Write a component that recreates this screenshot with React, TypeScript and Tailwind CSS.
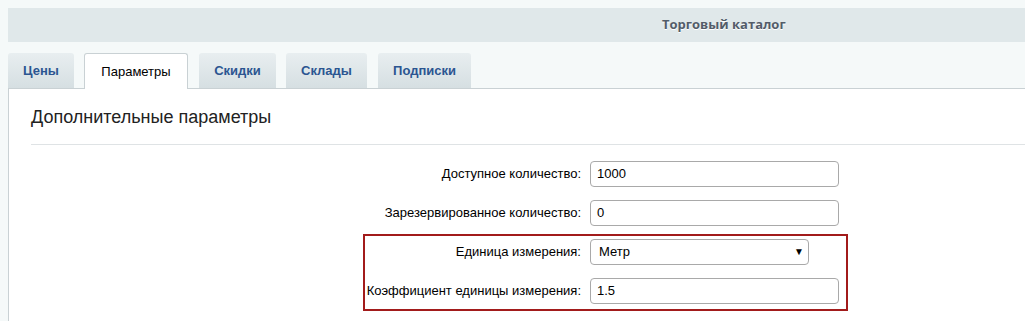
import React from "react";

const tabs = [
  { label: "Цены", w: "w-[66px]", ml: "" },
  { label: "Параметры", w: "w-[104px]", ml: "ml-[10px]", active: true },
  { label: "Скидки", w: "w-[77px]", ml: "ml-[11px]" },
  { label: "Склады", w: "w-[81px]", ml: "ml-[10px]" },
  { label: "Подписки", w: "w-[93px]", ml: "ml-[11px]" },
];

function Field({ label, value, select }: { label: string; value: string; select?: boolean }) {
  return (
    <div className="flex items-center h-[39px]">
      <div className="w-[581px] shrink-0 pr-[9px] text-right text-[13px] text-[#000]">{label}</div>
      {select ? (
        <div className="w-[219px] h-[26px] border border-[#a9a9a9] rounded-[4px] bg-white flex items-center justify-between pl-[8px] pr-[4px] text-[13px] text-[#000]">
          <span>{value}</span>
          <span className="text-[10px] leading-none">▼</span>
        </div>
      ) : (
        <div className="w-[249px] h-[26px] border border-[#a9a9a9] rounded-[4px] bg-white flex items-center px-[6px] text-[13px] text-[#000]">
          {value}
        </div>
      )}
    </div>
  );
}

export default function App() {
  return (
    <div className="w-[1025px] h-[321px] overflow-hidden bg-[#f5f9f9] pt-[8px] pl-[8px] font-['Liberation_Sans',Arial,sans-serif]">
      {/* Section header */}
      <div className="h-[34px] bg-[#e0e8ea] flex items-center pl-[654px]">
        <span className="font-['Open_Sans',sans-serif] font-bold text-[13px] text-[#535c69] [text-shadow:0_1px_0_#fff]">
          Торговый каталог
        </span>
      </div>

      {/* Tabs */}
      <div className="flex mt-[11px] h-[35px] relative z-10">
        {tabs.map((t) =>
          t.active ? (
            <div
              key={t.label}
              className={`${t.w} ${t.ml} h-[36px] bg-white border border-b-0 border-[#c9d1d4] rounded-t-[3px] flex items-center justify-center text-[13px] text-[#000]`}
            >
              {t.label}
            </div>
          ) : (
            <div
              key={t.label}
              className={`${t.w} ${t.ml} h-[35px] bg-gradient-to-b from-[#e8eef0] to-[#d6dfe2] rounded-t-[3px] flex items-center justify-center text-[13px] font-bold text-[#2b5591]`}
            >
              {t.label}
            </div>
          )
        )}
      </div>

      {/* Panel */}
      <div className="bg-white border-t border-l border-[#c9d1d4] h-[240px]">
        <div className="pl-[22px] pt-[17px]">
          <div className="text-[18px] text-[#222] leading-[22px]">Дополнительные параметры</div>
          <div className="mt-[16px] h-px bg-[#dfe3e5]" />
        </div>

        <div className="mt-[9px]">
          <Field label="Доступное количество:" value="1000" />
          <Field label="Зарезервированное количество:" value="0" />
          <div className="relative">
            <Field label="Единица измерения:" value="Метр" select />
            <Field label="Коэффициент единицы измерения:" value="1.5" />
            <div className="absolute left-[354px] top-[2px] w-[485px] h-[77px] border-2 border-[#a21b1b] pointer-events-none" />
          </div>
        </div>
      </div>
    </div>
  );
}
